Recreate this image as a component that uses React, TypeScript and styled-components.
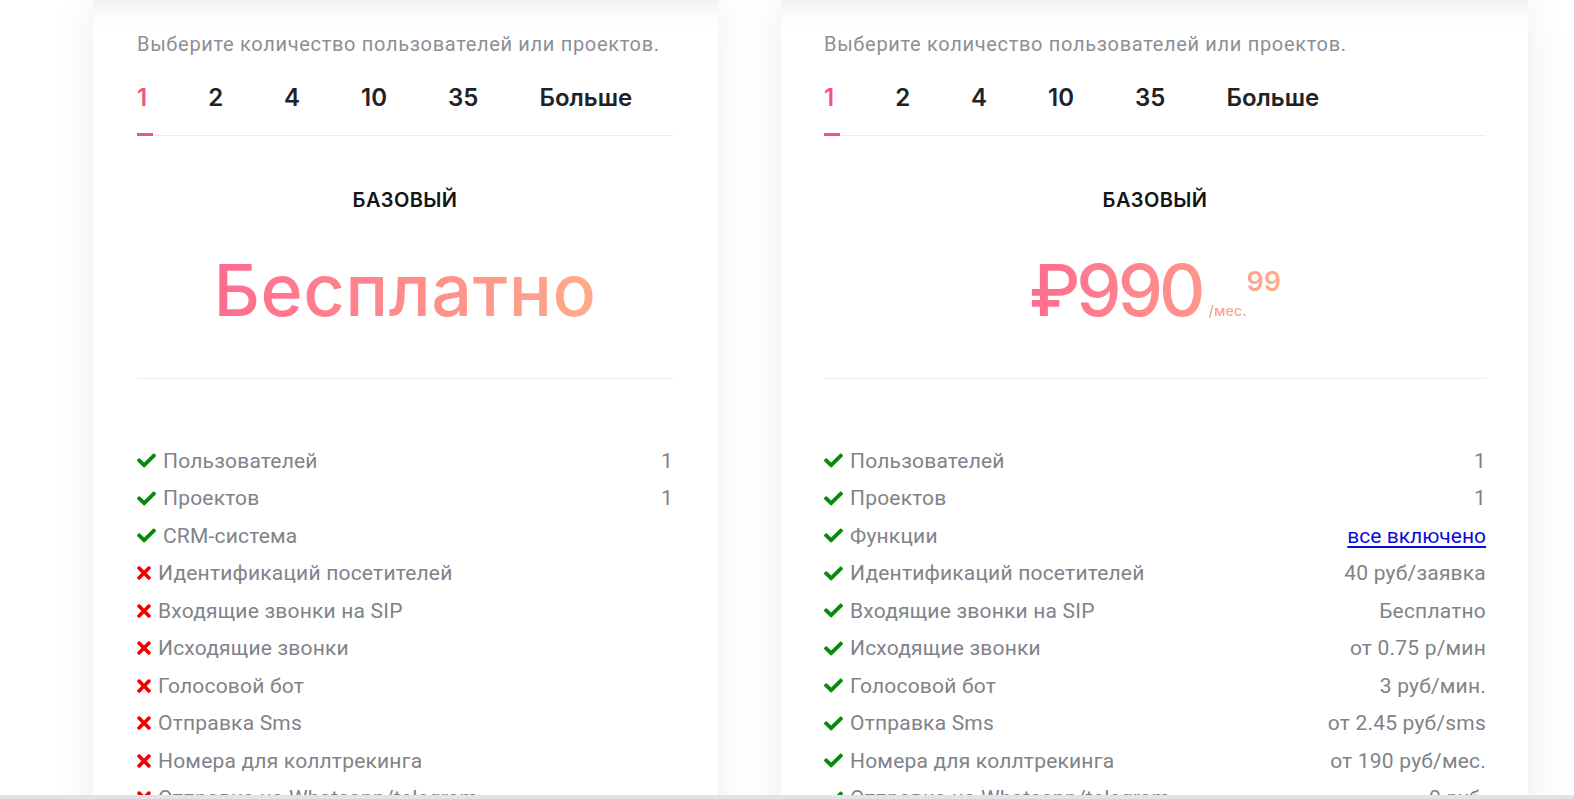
import React from "react";
import styled, { createGlobalStyle } from "styled-components";

const GlobalStyle = createGlobalStyle`
  html, body {
    margin: 0;
    padding: 0;
    background: #ffffff;
    overflow: hidden;
  }
  body {
    font-family: Roboto, "Noto Sans", Arial, sans-serif;
  }
`;

const Page = styled.div`
  display: flex;
  align-items: flex-start;
  gap: 63px;
  padding-left: 93px;
  height: 799px;
  overflow: hidden;
  box-sizing: border-box;
`;

const Card = styled.section<{ $w: number; $pl: number; $pr: number }>`
  flex: none;
  width: ${(p) => p.$w}px;
  min-height: 900px;
  box-sizing: border-box;
  padding: 32px ${(p) => p.$pr}px 0 ${(p) => p.$pl}px;
  background: linear-gradient(to bottom, #f2f2f2 0px, #fbfbfb 14px, #ffffff 30px);
  box-shadow: 0 0 40px rgba(0, 0, 0, 0.075);
`;

const Hint = styled.p`
  margin: 0;
  font-family: Roboto, "Noto Sans", sans-serif;
  font-size: 20px;
  letter-spacing: 0.68px;
  line-height: 24px;
  color: #8c8f95;
  white-space: nowrap;
`;

const TabList = styled.div`
  display: flex;
  gap: 61px;
  margin-top: 27px;
  border-bottom: 1px solid #ececef;
`;

const Tab = styled.div<{ $active?: boolean }>`
  position: relative;
  padding-bottom: 22px;
  font-family: Inter, "Noto Sans", sans-serif;
  font-weight: 600;
  font-size: 24px;
  line-height: 30px;
  color: ${(p) => (p.$active ? "#f0557f" : "#222226")};
  cursor: pointer;

  &::after {
    content: "";
    display: ${(p) => (p.$active ? "block" : "none")};
    position: absolute;
    left: 0;
    bottom: -1px;
    width: 16px;
    height: 3px;
    background: #f0557f;
  }
`;

const PlanName = styled.h3`
  margin: 52px 0 0;
  text-align: center;
  font-family: Inter, "Noto Sans", sans-serif;
  font-weight: 600;
  font-size: 20px;
  letter-spacing: 0.4px;
  line-height: 24px;
  color: #141414;
  text-transform: uppercase;
`;

const PriceRow = styled.div`
  display: flex;
  justify-content: center;
  margin-top: 38px;
  height: 80px;
`;

const Price = styled.div`
  display: inline-block;
  font-family: Inter, "Noto Sans", sans-serif;
  font-weight: 500;
  line-height: 80px;
  height: 80px;
  white-space: nowrap;
  background: linear-gradient(90deg, #ff6b8f 0%, #ffab8a 100%);
  -webkit-background-clip: text;
  background-clip: text;
  -webkit-text-fill-color: transparent;
  color: transparent;
`;

const Amount = styled.span<{ $tight?: boolean }>`
  font-size: 72px;
  letter-spacing: ${(p) => (p.$tight ? "-4px" : "0.5px")};
`;

const Per = styled.span`
  font-size: 14.5px;
  margin-left: 7px;
`;

const Cents = styled.span`
  font-size: 27px;
  font-weight: 600;
  line-height: 0;
  vertical-align: 25px;
`;

const Divider = styled.hr`
  margin: 48px 0 0;
  border: 0;
  height: 1px;
  background: #ececef;
`;

const Features = styled.ul`
  list-style: none;
  margin: 63px 0 0;
  padding: 0;
`;

const Feature = styled.li`
  display: flex;
  align-items: center;
  justify-content: space-between;
  height: 37.5px;
  font-family: Roboto, "Noto Sans", sans-serif;
  font-size: 21px;
  letter-spacing: 0.2px;
  color: #808389;
  white-space: nowrap;
`;

const Label = styled.span`
  display: flex;
  align-items: center;
  gap: 7px;
`;

const Value = styled.span`
  text-align: right;
`;

const ValueLink = styled.a`
  color: #0c0cd8;
  letter-spacing: 0;
  text-decoration: underline;
  text-underline-offset: 3px;
`;

const IconBox = styled.svg`
  flex: none;
  display: block;
`;

const CheckIcon = () => (
  <IconBox width="19" height="19" viewBox="0 0 512 512" aria-hidden>
    <path
      fill="#0a8a0a"
      d="M173.898 439.404l-166.4-166.4c-9.997-9.997-9.997-26.206 0-36.204l36.203-36.204c9.997-9.998 26.207-9.998 36.204 0L192 312.69 432.095 72.596c9.997-9.997 26.207-9.997 36.204 0l36.203 36.204c9.997 9.997 9.997 26.206 0 36.204l-294.4 294.401c-9.998 9.997-26.207 9.997-36.204-.001z"
    />
  </IconBox>
);

const CrossIcon = () => (
  <IconBox width="14" height="20" viewBox="0 0 352 512" aria-hidden>
    <path
      fill="#f20000"
      d="M242.72 256l100.07-100.07c12.28-12.28 12.28-32.19 0-44.48l-22.24-22.240c-12.28-12.28-32.19-12.28-44.48 0L176 189.28 75.93 89.21c-12.28-12.28-32.19-12.28-44.48 0L9.21 111.45c-12.28 12.28-12.28 32.19 0 44.48L109.28 256 9.21 356.07c-12.28 12.28-12.28 32.19 0 44.48l22.24 22.24c12.28 12.28 32.2 12.28 44.48 0L176 322.72l100.07 100.07c12.28 12.28 32.2 12.28 44.48 0l22.24-22.24c12.28-12.28 12.28-32.19 0-44.48L242.72 256z"
    />
  </IconBox>
);

type Item = { ok: boolean; label: string; value?: string; link?: boolean };

const tabs = ["1", "2", "4", "10", "35", "Больше"];

const freeItems: Item[] = [
  { ok: true, label: "Пользователей", value: "1" },
  { ok: true, label: "Проектов", value: "1" },
  { ok: true, label: "CRM-система" },
  { ok: false, label: "Идентификаций посетителей" },
  { ok: false, label: "Входящие звонки на SIP" },
  { ok: false, label: "Исходящие звонки" },
  { ok: false, label: "Голосовой бот" },
  { ok: false, label: "Отправка Sms" },
  { ok: false, label: "Номера для коллтрекинга" },
  { ok: false, label: "Отправка на Whatsapp/telegram" },
];

const paidItems: Item[] = [
  { ok: true, label: "Пользователей", value: "1" },
  { ok: true, label: "Проектов", value: "1" },
  { ok: true, label: "Функции", value: "все включено", link: true },
  { ok: true, label: "Идентификаций посетителей", value: "40 руб/заявка" },
  { ok: true, label: "Входящие звонки на SIP", value: "Бесплатно" },
  { ok: true, label: "Исходящие звонки", value: "от 0.75 р/мин" },
  { ok: true, label: "Голосовой бот", value: "3 руб/мин." },
  { ok: true, label: "Отправка Sms", value: "от 2.45 руб/sms" },
  { ok: true, label: "Номера для коллтрекинга", value: "от 190 руб/мес." },
  { ok: true, label: "Отправка на Whatsapp/telegram", value: "0 руб." },
];

const FeatureList = ({ items }: { items: Item[] }) => (
  <Features>
    {items.map((it) => (
      <Feature key={it.label}>
        <Label>
          {it.ok ? <CheckIcon /> : <CrossIcon />}
          {it.label}
        </Label>
        {it.value &&
          (it.link ? (
            <ValueLink href="#">{it.value}</ValueLink>
          ) : (
            <Value>{it.value}</Value>
          ))}
      </Feature>
    ))}
  </Features>
);

const Tabs = () => (
  <TabList>
    {tabs.map((t, i) => (
      <Tab key={t} $active={i === 0}>
        {t}
      </Tab>
    ))}
  </TabList>
);

const BottomStrip = styled.div`
  position: fixed;
  left: 0;
  right: 0;
  bottom: 0;
  height: 4px;
  background: #e2e2e7;
`;

export default function App() {
  return (
    <>
      <GlobalStyle />
      <Page>
        <Card $w={625} $pl={44} $pr={45}>
          <Hint>Выберите количество пользователей или проектов.</Hint>
          <Tabs />
          <PlanName>Базовый</PlanName>
          <PriceRow>
            <Price>
              <Amount>Бесплатно</Amount>
            </Price>
          </PriceRow>
          <Divider />
          <FeatureList items={freeItems} />
        </Card>
        <Card $w={747} $pl={43} $pr={42}>
          <Hint>Выберите количество пользователей или проектов.</Hint>
          <Tabs />
          <PlanName>Базовый</PlanName>
          <PriceRow>
            <Price>
              <Amount $tight>₽990</Amount>
              <Per>/мес.</Per>
              <Cents>99</Cents>
            </Price>
          </PriceRow>
          <Divider />
          <FeatureList items={paidItems} />
        </Card>
      </Page>
      <BottomStrip />
    </>
  );
}
